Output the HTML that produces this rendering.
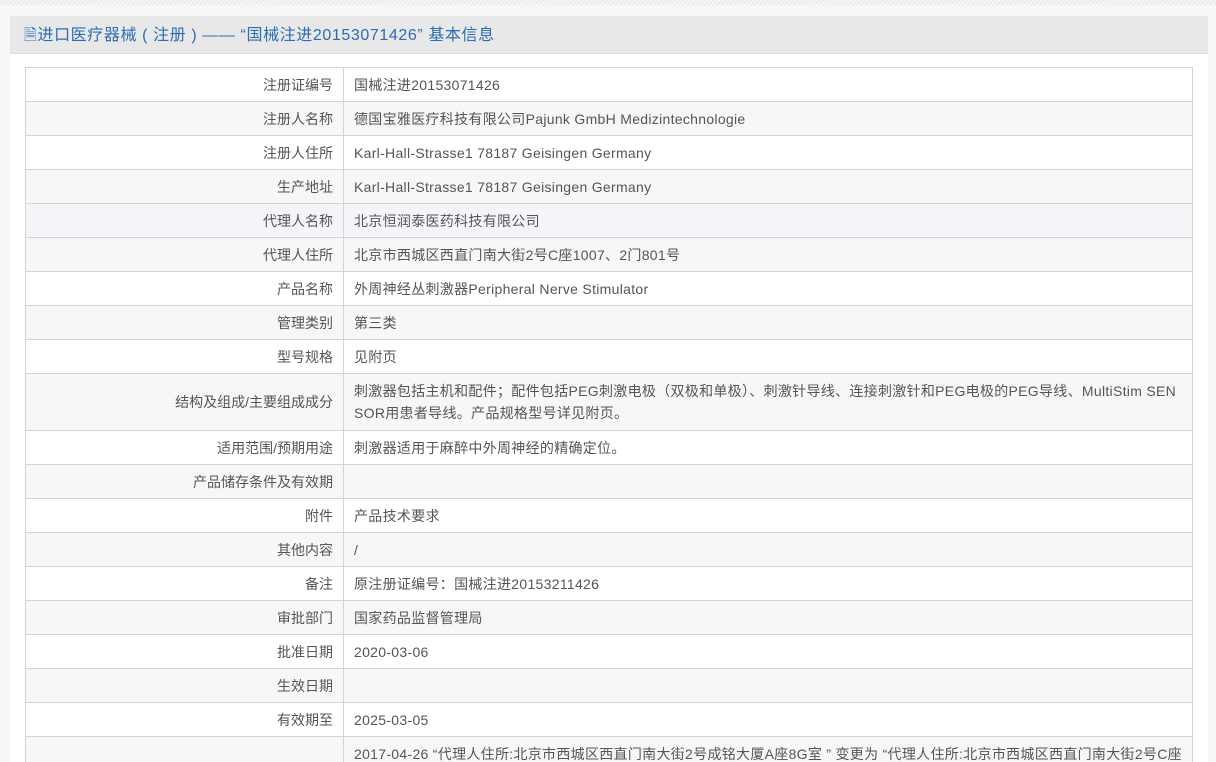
<!DOCTYPE html>
<html><head><meta charset="utf-8"><style>
*{margin:0;padding:0;box-sizing:border-box}
html,body{width:1216px;height:762px;overflow:hidden}
body{background:#f7f7f7;font-family:"Liberation Sans","Noto Sans CJK SC",sans-serif;position:relative}
.hatch{position:absolute;left:0;top:0;width:1216px;height:5px;background:repeating-linear-gradient(135deg,#e4e4e4 0 1px,#f7f7f7 1px 3px)}
.panel{position:absolute;left:10px;top:16px;width:1198px;height:760px;background:#fff}
.hd{height:38px;background:#e8e8e8;border-bottom:1px solid #ddd;color:#2b6cb3;font-size:16px;line-height:40px;padding-left:14px;letter-spacing:0.6px}
table{position:absolute;left:15px;top:51px;width:1168px;border-collapse:collapse;font-size:14px;color:#555;letter-spacing:0.3px}
td{border:1px solid #d4d4d4;height:34px;padding:0 10px;vertical-align:middle;line-height:22px;word-break:break-all}
td.l{width:318px;text-align:right;letter-spacing:0}
tr:nth-child(even) td{background:#f7f7f7}
tr.hl td{background:#f3f5f9}
</style></head><body>
<div class="hatch"></div>
<div class="panel">
<div class="hd">🗎进口医疗器械 ( 注册 ) —— “国械注进20153071426” 基本信息</div>
<table>
<tr><td class="l">注册证编号</td><td>国械注进20153071426</td></tr>
<tr><td class="l">注册人名称</td><td>德国宝雅医疗科技有限公司Pajunk GmbH Medizintechnologie</td></tr>
<tr><td class="l">注册人住所</td><td>Karl-Hall-Strasse1 78187 Geisingen Germany</td></tr>
<tr><td class="l">生产地址</td><td>Karl-Hall-Strasse1 78187 Geisingen Germany</td></tr>
<tr class="hl"><td class="l">代理人名称</td><td>北京恒润泰医药科技有限公司</td></tr>
<tr><td class="l">代理人住所</td><td>北京市西城区西直门南大街2号C座1007、2门801号</td></tr>
<tr><td class="l">产品名称</td><td>外周神经丛刺激器Peripheral Nerve Stimulator</td></tr>
<tr><td class="l">管理类别</td><td>第三类</td></tr>
<tr><td class="l">型号规格</td><td>见附页</td></tr>
<tr><td class="l" style="height:57px">结构及组成/主要组成成分</td><td>刺激器包括主机和配件；配件包括PEG刺激电极（双极和单极）、刺激针导线、连接刺激针和PEG电极的PEG导线、MultiStim SENSOR用患者导线。产品规格型号详见附页。</td></tr>
<tr><td class="l">适用范围/预期用途</td><td>刺激器适用于麻醉中外周神经的精确定位。</td></tr>
<tr><td class="l">产品储存条件及有效期</td><td></td></tr>
<tr><td class="l">附件</td><td>产品技术要求</td></tr>
<tr><td class="l">其他内容</td><td>/</td></tr>
<tr><td class="l">备注</td><td>原注册证编号：国械注进20153211426</td></tr>
<tr><td class="l">审批部门</td><td>国家药品监督管理局</td></tr>
<tr><td class="l">批准日期</td><td>2020-03-06</td></tr>
<tr><td class="l">生效日期</td><td></td></tr>
<tr><td class="l">有效期至</td><td>2025-03-05</td></tr>
<tr><td class="l" style="vertical-align:top"></td><td style="vertical-align:top;padding-top:6px">2017-04-26 “代理人住所:北京市西城区西直门南大街2号成铭大厦A座8G室 ” 变更为 “代理人住所:北京市西城区西直门南大街2号C座1007、2门801号”</td></tr>
</table>
</div>
</body></html>
